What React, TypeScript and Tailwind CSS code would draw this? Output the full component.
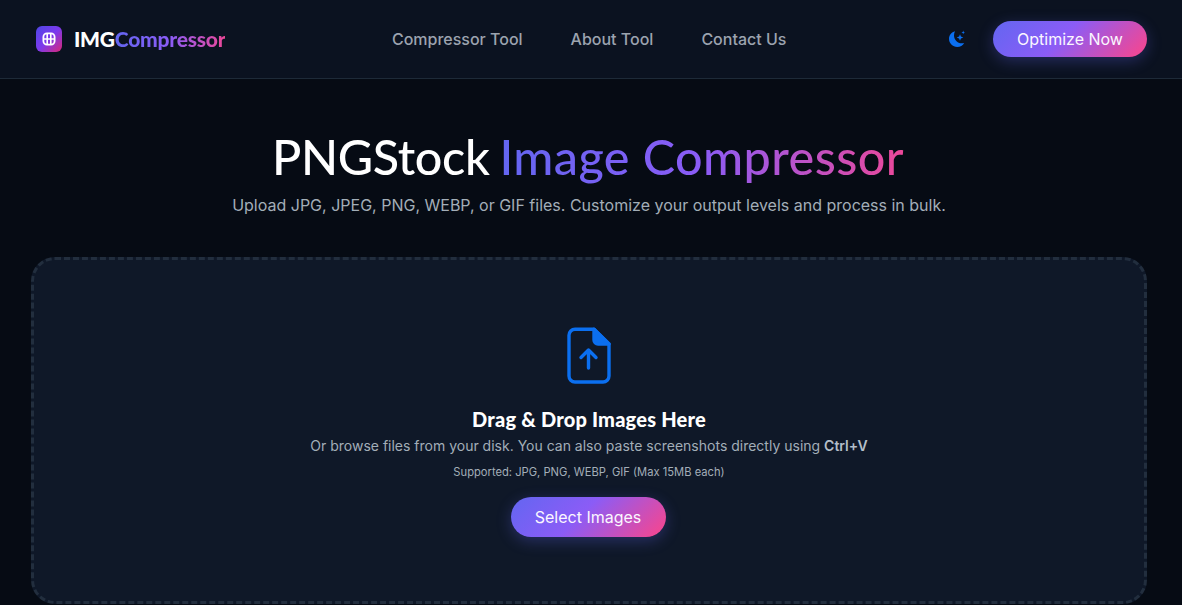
const heading = "font-['Lato','Noto_Sans',sans-serif]";
const gradientText =
  "bg-[linear-gradient(90deg,#6366f1,#8b5cf6,#ec4899)] bg-clip-text text-transparent";

function GradientButton({ label, className }: { label: string; className: string }) {
  return (
    <button
      className={`rounded-full bg-[linear-gradient(135deg,#6366f1_0%,#8b5cf6_45%,#ec4899_92%)] text-[#fbf7ff] shadow-[0_4px_15px_rgba(99,102,241,0.3)] ${className}`}
    >
      {label}
    </button>
  );
}

function LogoMark() {
  return (
    <div className="flex h-[26px] w-[26px] items-center justify-center rounded-[6px] bg-[linear-gradient(135deg,#4f46e5,#7c3aed,#db2777)]">
      <svg width="14" height="14" viewBox="0 0 14 14" fill="none" stroke="white" strokeWidth="1.8">
        <rect x="1.4" y="1.4" width="11.2" height="11.2" rx="3.6" />
        <path d="M5.2 1v12M8.8 1v12M1 7h12" strokeWidth="1.6" />
      </svg>
    </div>
  );
}

function MoonIcon() {
  return (
    <svg width="18" height="18" viewBox="0 0 18 18" fill="#0b6ff0">
      <path d="M7 1.2C3.6 2 1 5 1 8.8 1 13.3 4.7 17 9.2 17c3 0 5.6-1.6 7-4-.8.2-1.6.3-2.4.3C9.5 13.3 6 9.8 6 5.5c0-1.5.4-3 1-4.3Z" />
      <path d="M12 4.2l.9 2.4 2.4.9-2.4.9-.9 2.4-.9-2.4-2.4-.9 2.4-.9Z" />
      <path d="M15.2.6l.5 1.3 1.3.5-1.3.5-.5 1.3-.5-1.3-1.3-.5 1.3-.5Z" />
    </svg>
  );
}

function UploadIcon() {
  return (
    <svg width="44" height="57" viewBox="0 0 44 57" fill="none" stroke="#0b6ff0" strokeWidth="3.4" strokeLinecap="round" strokeLinejoin="round">
      <path d="M27 2.2H8A6 6 0 0 0 2 8.2V49a6 6 0 0 0 6 6h28a6 6 0 0 0 6-6V17Z" />
      <path d="M27 2.2 42 17H31a4 4 0 0 1-4-4Z" fill="#0b6ff0" />
      <path d="M21.5 41V23.5M14 30.5l7.5-7.5 7.5 7.5" strokeWidth="3.4" />
    </svg>
  );
}

function Navbar() {
  return (
    <header className="border-b border-[#1e2a38] bg-[#0b1220]">
      <div className="mr-[4px] flex h-[78px] items-center justify-between pl-[36px] pr-[31px]">
        <div className="flex items-center gap-[12px]">
          <LogoMark />
          <div className={`${heading} text-[21px] font-black tracking-[-0.25px]`}>
            <span className="text-white">IMG</span>
            <span className={gradientText}>Compressor</span>
          </div>
        </div>
        <nav className="ml-[5px] flex items-center gap-[48px] text-[16px] font-medium text-[#9ca3af]">
          <a>Compressor Tool</a>
          <a>About Tool</a>
          <a>Contact Us</a>
        </nav>
        <div className="flex items-center gap-[27px]">
          <MoonIcon />
          <GradientButton label="Optimize Now" className="h-[36px] w-[154px] text-[16px]" />
        </div>
      </div>
    </header>
  );
}

function DropZone() {
  return (
    <section className="flex h-[347px] flex-col items-center rounded-[24px] border-[3px] border-dashed border-[#222e3e] bg-[#0f1828] pt-[67px]">
      <UploadIcon />
      <h2 className={`${heading} mt-[21px] text-[20px] font-black leading-[28px] tracking-[0.2px] text-white`}>
        Drag &amp; Drop Images Here
      </h2>
      <p className="mt-[3px] text-[14px] leading-[20px] text-[#a3aeb8]">
        Or browse files from your disk. You can also paste screenshots directly using{" "}
        <strong className="font-semibold text-[#b4bfca]">Ctrl+V</strong>
      </p>
      <p className="mt-[8px] text-[11.2px] leading-[16px] text-[#a3aeb8]">
        Supported: JPG, PNG, WEBP, GIF (Max 15MB each)
      </p>
      <GradientButton label="Select Images" className="mr-[2px] mt-[17px] h-[40px] w-[155px] text-[16px]" />
    </section>
  );
}

export default function App() {
  return (
    <div className="h-[605px] overflow-hidden bg-[#060b14] font-['Inter',sans-serif]">
      <Navbar />
      <main className="mr-[4px] px-[31px]">
        <div className="flex h-[178px] flex-col items-center pt-[48px]">
          <h1 className={`${heading} mr-[2px] text-[48.5px] font-medium leading-[58px]`}>
            <span className="tracking-[-0.35px] text-white">PNGStock </span>
            <span className={`${gradientText} -ml-[2px] tracking-[0.45px]`}>Image Compressor</span>
          </h1>
          <p className="mt-[8px] text-[16px] leading-[24px] text-[#a3aeb8]">
            Upload JPG, JPEG, PNG, WEBP, or GIF files. Customize your output levels and process in bulk.
          </p>
        </div>
        <DropZone />
      </main>
    </div>
  );
}
